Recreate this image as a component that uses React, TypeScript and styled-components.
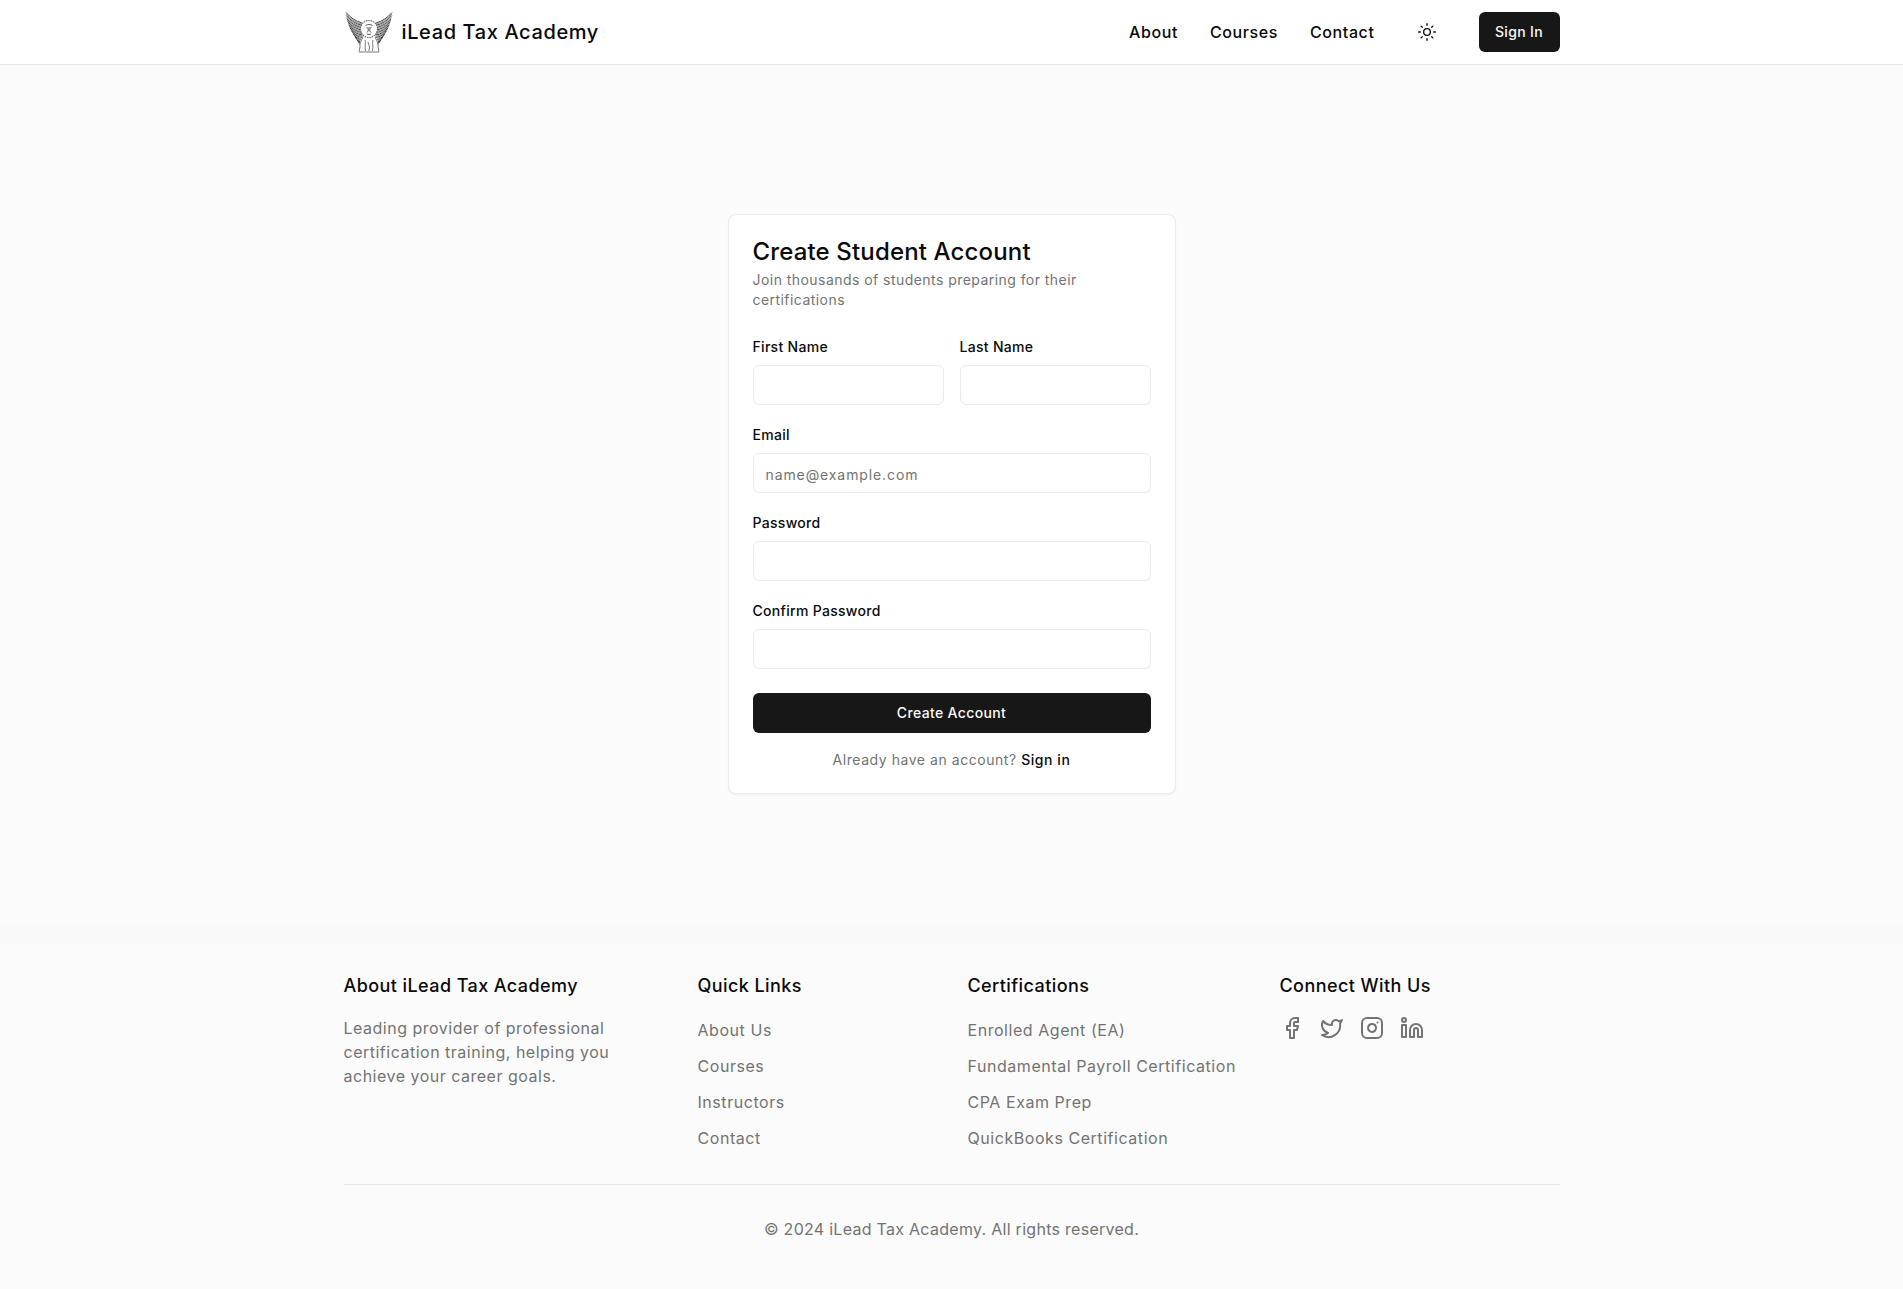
import React from "react";
import styled, { createGlobalStyle } from "styled-components";
import { Sun, Facebook, Twitter, Instagram, Linkedin } from "lucide-react";

const Global = createGlobalStyle`
  * { box-sizing: border-box; }
  html, body { margin: 0; padding: 0; background: #fbfbfb; }
  body { font-family: Inter, "Open Sans", "Liberation Sans", sans-serif; color: #0a0a0a; }
  a { color: inherit; text-decoration: none; }
`;

const Page = styled.div`
  display: flex;
  flex-direction: column;
  min-height: 1289px;
  background: #fbfbfb;
`;

const Header = styled.header`
  height: 65px;
  background: #fff;
  border-bottom: 1px solid #e6e6e6;
`;

const Container = styled.div`
  width: 1280px;
  margin: 0 auto;
  padding: 0 32px;
`;

const HeaderRow = styled(Container)`
  height: 64px;
  display: flex;
  align-items: center;
  justify-content: space-between;
`;

const Brand = styled.a`
  display: flex;
  align-items: center;
  gap: 8px;
  font-size: 20px;
  font-weight: 450;
  letter-spacing: 0.62px;
`;

const Nav = styled.nav`
  display: flex;
  align-items: center;
  gap: 32px;
`;

const NavLink = styled.a`
  font-size: 16px;
  font-weight: 450;
  letter-spacing: 0.6px;
`;

const IconButton = styled.button`
  width: 40px;
  height: 40px;
  display: flex;
  align-items: center;
  justify-content: center;
  border: 0;
  padding: 0;
  background: transparent;
  color: #0a0a0a;
`;

const DarkButton = styled.button<{ $wide?: boolean }>`
  height: 40px;
  width: ${(p) => (p.$wide ? "100%" : "81px")};
  padding: 0 0 2px;
  border: 0;
  border-radius: 6px;
  background: #171717;
  color: #fafafa;
  font-family: inherit;
  font-size: 14px;
  font-weight: 450;
  letter-spacing: 0.35px;
`;

const Main = styled.main`
  display: flex;
  justify-content: center;
  padding: 149px 0 130px;
`;

const Card = styled.section`
  width: 448px;
  padding: 25px 24px 23px;
  background: #fff;
  border: 1px solid #ebebeb;
  border-radius: 8px;
  box-shadow: 0 1px 2px rgba(0, 0, 0, 0.05);
`;

const Title = styled.h1`
  margin: 0;
  font-size: 24px;
  line-height: 24px;
  font-weight: 500;
  letter-spacing: 0.15px;
  color: #0a0a0a;
`;

const Subtitle = styled.p`
  margin: 6px 0 0;
  font-size: 14px;
  line-height: 20px;
  letter-spacing: 0.45px;
  color: #737373;
`;

const Form = styled.form`
  margin-top: 27px;
  display: flex;
  flex-direction: column;
  gap: 20px;
`;

const TwoCols = styled.div`
  display: grid;
  grid-template-columns: 1fr 1fr;
  gap: 16px;
`;

const Field = styled.div`
  display: flex;
  flex-direction: column;
  gap: 9px;
`;

const Label = styled.label`
  font-size: 14px;
  line-height: 19px;
  font-weight: 450;
  letter-spacing: 0.3px;
  color: #0a0a0a;
`;

const Input = styled.input`
  width: 100%;
  height: 40px;
  padding: 2px 12px 0;
  border: 1px solid #ebebeb;
  border-radius: 6px;
  background: #fff;
  font-family: inherit;
  font-size: 14px;
  letter-spacing: 0.9px;
  outline: none;
  &::placeholder { color: #737373; opacity: 1; }
`;

const SubmitRow = styled.div`
  margin-top: 4px;
`;

const Already = styled.p`
  margin: 17px 0 0;
  text-align: center;
  font-size: 14px;
  line-height: 20px;
  letter-spacing: 0.55px;
  color: #737373;
`;

const SignInLink = styled.a`
  font-weight: 450;
  color: #0a0a0a;
`;

const Band = styled.div`
  height: 20px;
  background: #f9f9f9;
`;

const Footer = styled.footer`
  flex: 1;
  padding-top: 32px;
`;

const FooterGrid = styled.div`
  display: grid;
  grid-template-columns: 354px 270px 312px 1fr;
`;

const FooterHeading = styled.h3`
  margin: 0 0 20px;
  font-size: 18px;
  line-height: 20px;
  font-weight: 450;
  letter-spacing: 0.42px;
  color: #0a0a0a;
`;

const FooterText = styled.p`
  margin: 0;
  width: 290px;
  font-size: 16px;
  line-height: 24px;
  letter-spacing: 0.5px;
  color: #737373;
`;

const LinkList = styled.ul`
  list-style: none;
  margin: 0;
  padding: 2px 0 0;
  display: flex;
  flex-direction: column;
  gap: 12px;
`;

const FooterLink = styled.a`
  display: block;
  font-size: 16px;
  line-height: 24px;
  letter-spacing: 0.55px;
  color: #737373;
`;

const Socials = styled.div`
  display: flex;
  gap: 16px;
  color: #737373;
`;

const Divider = styled.div`
  margin-top: 34px;
  border-top: 1px solid #e5e5e5;
`;

const Copyright = styled.p`
  margin: 32px 0 0;
  text-align: center;
  font-size: 16px;
  line-height: 24px;
  letter-spacing: 0.28px;
  color: #737373;
`;

function LionLogo() {
  const feathers = (mirror: boolean) => {
    const fx = (x: number) => (mirror ? 50 - x : x);
    const out: React.ReactElement[] = [];
    for (let i = 0; i < 20; i++) {
      const t = i / 19;
      const tipX = 2 + t * t * 12 + t * 1;
      const tipY = 0.5 + t * 29;
      const rootX = 18 + t * 1;
      const rootY = 11 + t * 23;
      const cx = (tipX + rootX) / 2 - 1.5;
      const cy = (tipY + rootY) / 2 + 2.5;
      out.push(
        <path
          key={`${mirror}-${i}`}
          d={`M${fx(tipX)} ${tipY} Q${fx(cx)} ${cy} ${fx(rootX)} ${rootY}`}
          stroke={i % 2 ? "#666" : "#1f1f1f"}
          strokeWidth={i % 2 ? 0.7 : 0.85}
          fill="none"
        />
      );
    }
    return out;
  };
  return (
    <svg width="50" height="41" viewBox="0 0 50 41" aria-hidden="true">
      {feathers(false)}
      {feathers(true)}
      <path d="M17 26h16l3 14H14z" fill="#fff" />
      <circle cx="25" cy="17" r="8.5" fill="#fff" stroke="#666" strokeWidth="1.1" strokeDasharray="1.5 0.8" />
      <path
        d="M21.5 13.5c2-1.3 5-1.3 7 0M22.5 15.5c1 .5 1.6.5 2 0M25.5 15.5c.6.5 1.2.5 2 0M24.2 16v3l-1.2 1.5M25.8 16v3l1.2 1.5M23 22c1.2.7 2.8.7 4 0"
        stroke="#333"
        strokeWidth="0.8"
        fill="none"
      />
      <path
        d="M18.5 26c-1.5 3-3 6-2.5 9l-1 4.5M31.5 26c1.5 3 3 6 2.5 9l1 4.5M21 28c1 3-.5 6 .5 11M29 28c-1 3 .5 6-.5 11M24 30l1.5 5-.5 4M15 40h20"
        stroke="#555"
        strokeWidth="0.8"
        fill="none"
      />
    </svg>
  );
}

export default function App() {
  return (
    <Page>
      <Global />
      <Header>
        <HeaderRow>
          <Brand href="#">
            <LionLogo />
            iLead Tax Academy
          </Brand>
          <Nav>
            <NavLink href="#">About</NavLink>
            <NavLink href="#">Courses</NavLink>
            <NavLink href="#">Contact</NavLink>
            <IconButton aria-label="Toggle theme">
              <Sun size={20} strokeWidth={1.6} />
            </IconButton>
            <DarkButton>Sign In</DarkButton>
          </Nav>
        </HeaderRow>
      </Header>
      <Main>
        <Card>
          <Title>Create Student Account</Title>
          <Subtitle>Join thousands of students preparing for their certifications</Subtitle>
          <Form>
            <TwoCols>
              <Field>
                <Label>First Name</Label>
                <Input />
              </Field>
              <Field>
                <Label>Last Name</Label>
                <Input />
              </Field>
            </TwoCols>
            <Field>
              <Label>Email</Label>
              <Input placeholder="name@example.com" />
            </Field>
            <Field>
              <Label>Password</Label>
              <Input type="password" />
            </Field>
            <Field>
              <Label>Confirm Password</Label>
              <Input type="password" />
            </Field>
            <SubmitRow>
              <DarkButton $wide type="button">Create Account</DarkButton>
            </SubmitRow>
          </Form>
          <Already>
            Already have an account? <SignInLink href="#">Sign in</SignInLink>
          </Already>
        </Card>
      </Main>
      <Band />
      <Footer>
        <Container>
          <FooterGrid>
            <div>
              <FooterHeading>About iLead Tax Academy</FooterHeading>
              <FooterText>
                Leading provider of professional certification training, helping you achieve your career goals.
              </FooterText>
            </div>
            <div>
              <FooterHeading>Quick Links</FooterHeading>
              <LinkList>
                {["About Us", "Courses", "Instructors", "Contact"].map((l) => (
                  <li key={l}>
                    <FooterLink href="#">{l}</FooterLink>
                  </li>
                ))}
              </LinkList>
            </div>
            <div>
              <FooterHeading>Certifications</FooterHeading>
              <LinkList>
                {["Enrolled Agent (EA)", "Fundamental Payroll Certification", "CPA Exam Prep", "QuickBooks Certification"].map((l) => (
                  <li key={l}>
                    <FooterLink href="#">{l}</FooterLink>
                  </li>
                ))}
              </LinkList>
            </div>
            <div>
              <FooterHeading>Connect With Us</FooterHeading>
              <Socials>
                <Facebook size={24} />
                <Twitter size={24} />
                <Instagram size={24} />
                <Linkedin size={24} />
              </Socials>
            </div>
          </FooterGrid>
          <Divider />
          <Copyright>© 2024 iLead Tax Academy. All rights reserved.</Copyright>
        </Container>
      </Footer>
    </Page>
  );
}
